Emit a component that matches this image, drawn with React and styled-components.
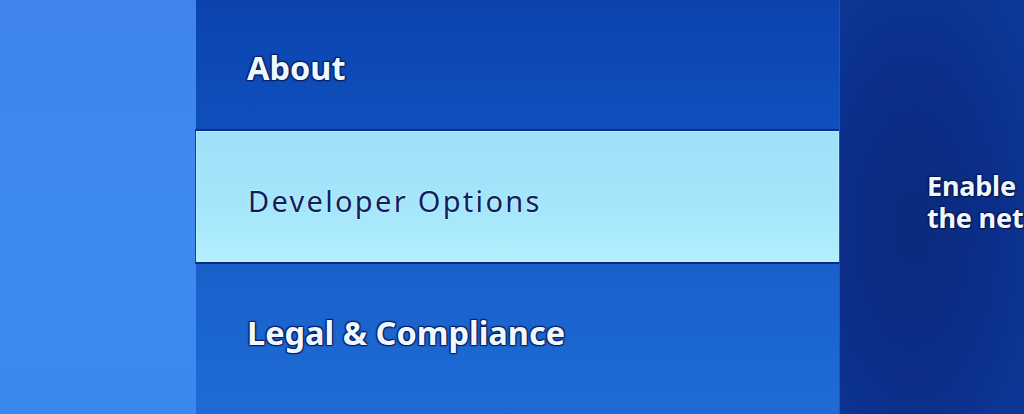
import React from "react";
import styled, { createGlobalStyle } from "styled-components";

const GlobalStyle = createGlobalStyle`
  html, body {
    margin: 0;
    padding: 0;
    background: #0b3a9e;
  }
  body {
    font-family: "Noto Sans", "Open Sans", sans-serif;
  }
`;

const App = () => (
  <>
    <GlobalStyle />
    <Screen>
      <SideRail />
      <Menu>
        <Item $height={129} $nudge={6}>
          <Label>About</Label>
        </Item>
        <Item $height={135} $nudge={7} $focused>
          <Label $focused>Developer Options</Label>
        </Item>
        <Item $height={136}>
          <Label>Legal &amp; Compliance</Label>
        </Item>
      </Menu>
      <Detail>
        <DetailText>
          Enable
          <br />
          the net
        </DetailText>
      </Detail>
    </Screen>
  </>
);

const Screen = styled.div`
  width: 1024px;
  height: 414px;
  overflow: hidden;
  display: flex;
  flex-direction: row;
`;

const SideRail = styled.div`
  width: 196px;
  flex-shrink: 0;
  background: linear-gradient(180deg, #3f84ec 0%, #3e8af0 55%, #3a88ee 100%);
`;

const Menu = styled.div`
  width: 644px;
  flex-shrink: 0;
  display: flex;
  flex-direction: column;
  background: linear-gradient(180deg, #0b43ad 0%, #0f4fbc 30%, #1a62cc 70%, #1f6bd6 100%);
  border-right: 1px solid #1a55c0;
  box-sizing: border-box;
`;

const Item = styled.div`
  height: ${(p) => p.$height}px;
  flex-shrink: 0;
  display: flex;
  align-items: center;
  padding-left: 51px;
  padding-top: ${(p) => p.$nudge || 0}px;
  box-sizing: border-box;
  ${(p) =>
    p.$focused &&
    `
    margin-left: -1px;
    padding-left: 52px;
    background: linear-gradient(180deg, #9fe0fa 0%, #a6e6fb 60%, #b2f0fd 100%);
    border-top: 2px solid #0a2f8c;
    border-bottom: 2px solid #0a2a80;
    border-left: 1px solid #1d3f9a;
    box-shadow: 0 0 0 1px rgba(200, 240, 255, 0.6) inset;
  `}
`;

const Label = styled.span`
  font-size: ${(p) => (p.$focused ? "29px" : "32.5px")};
  font-weight: ${(p) => (p.$focused ? 400 : 700)};
  letter-spacing: ${(p) => (p.$focused ? "2.3px" : "0px")};
  color: ${(p) => (p.$focused ? "#0d1f5c" : "#eef9ff")};
  text-shadow: ${(p) =>
    p.$focused
      ? "0 0 2px rgba(255, 255, 255, 0.8)"
      : "0 0 2px #0a1f66, 1px 1px 1px #0a1f66, -1px -1px 1px #0a1f66, 1px -1px 1px #0a1f66, -1px 1px 1px #0a1f66"};
  white-space: nowrap;
`;

const Detail = styled.div`
  flex: 1;
  background: radial-gradient(ellipse at 40% 55%, #0a2a7c 0%, #0b2e8a 50%, #0d3a9a 100%);
  padding-left: 87px;
  padding-top: 170px;
  overflow: hidden;
`;

const DetailText = styled.p`
  margin: 0;
  font-size: 27px;
  line-height: 32px;
  font-weight: 700;
  letter-spacing: -0.2px;
  color: #eef9ff;
  white-space: nowrap;
  text-shadow: 0 0 2px #06154a, 1px 1px 1px #06154a, -1px -1px 1px #06154a;
`;

export default App;
